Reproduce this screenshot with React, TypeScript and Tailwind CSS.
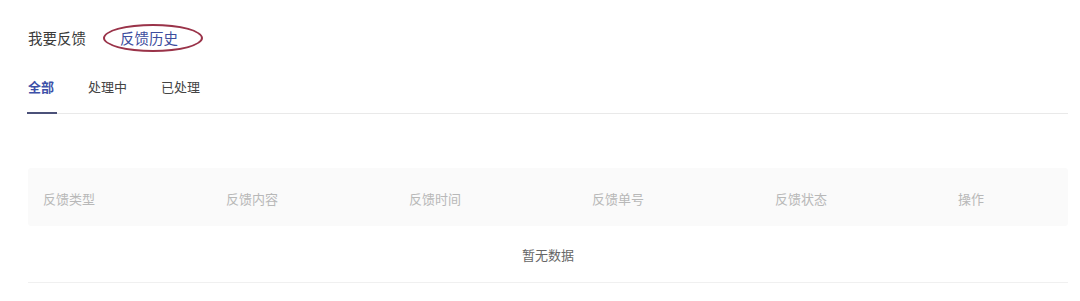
import React from "react";

const cols = ["反馈类型", "反馈内容", "反馈时间", "反馈单号", "反馈状态", "操作"];

export default function App() {
  return (
    <div
      className="w-[1080px] h-[301px] bg-white overflow-hidden"
      style={{ fontFamily: '"Noto Sans CJK SC", "Noto Sans", sans-serif' }}
    >
      <div className="pl-[28px] pr-[12px] pt-[28px]">
        {/* top switch */}
        <div className="flex items-center h-[20px] text-[14.5px] leading-[20px]">
          <span className="text-[#3a3a3a]">我要反馈</span>
          <span className="relative ml-[34px] text-[#3d4e9e]">
            反馈历史
            <span className="absolute left-[-17px] right-[-25px] top-[-4px] bottom-[-4px] rounded-[50%] border-2 border-[#9a3349]" />
          </span>
        </div>

        {/* tabs */}
        <div className="mt-[19px] flex gap-[34px] border-b border-[#e9e9e9] text-[13px] leading-[20px]">
          <div className="relative pt-[10px] pb-[16px] font-semibold text-[#3d50a8]">
            全部
            <span className="absolute left-[-1px] right-[-3px] bottom-[-1px] h-[2px] bg-[#4b5179]" />
          </div>
          <div className="pt-[10px] pb-[16px] text-[#444444]">处理中</div>
          <div className="pt-[10px] pb-[16px] text-[#444444]">已处理</div>
        </div>

        {/* table */}
        <div className="mt-[54px] w-[1040px]">
          <div className="grid grid-cols-[183px_183px_183px_183px_183px_1fr] h-[58px] bg-[#fafafa] rounded-[3px] pt-[21px] text-[13px] leading-[20px] text-[#b8b8b8]">
            {cols.map((c) => (
              <div key={c} className="pl-[15px]">
                {c}
              </div>
            ))}
          </div>
          <div className="h-[57px] flex items-center justify-center border-b border-[#f0f0f0] text-[13px] leading-[20px] text-[#666666] pt-[2px]">
            暂无数据
          </div>
        </div>
      </div>
    </div>
  );
}
